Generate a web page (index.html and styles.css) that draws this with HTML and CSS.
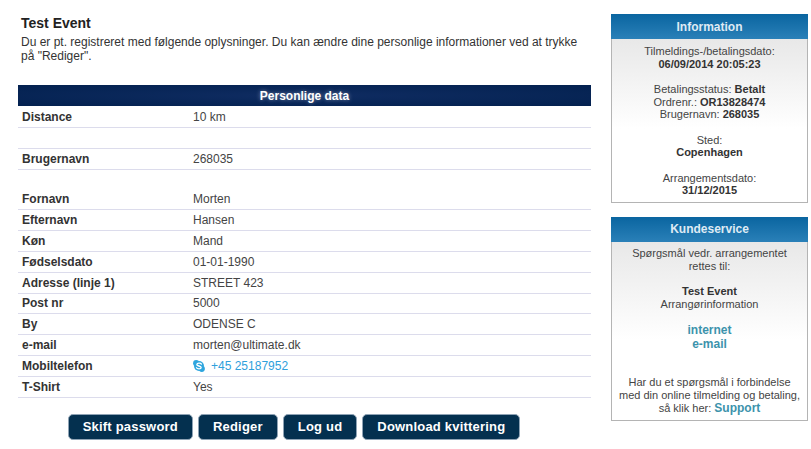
FILE: index.html
```html
<!DOCTYPE html>
<html lang="da">
<head>
<meta charset="utf-8">
<title>Test Event</title>
<link rel="stylesheet" href="styles.css">
</head>
<body>
<div class="page">
  <main class="main">
    <div class="intro">
      <h1 class="title">Test Event</h1>
      <p class="lead">Du er pt. registreret med følgende oplysninger. Du kan ændre dine personlige informationer ved at trykke på "Rediger".</p>
    </div>
    <h2 class="table-head">Personlige data</h2>
    <div class="row"><span class="label">Distance</span><span>10 km</span></div>
    <div class="row"></div>
    <div class="row"><span class="label">Brugernavn</span><span>268035</span></div>
    <div class="personal">
      <div class="row"><span class="label">Fornavn</span><span>Morten</span></div>
      <div class="row"><span class="label">Efternavn</span><span>Hansen</span></div>
      <div class="row"><span class="label">Køn</span><span>Mand</span></div>
      <div class="row"><span class="label">Fødselsdato</span><span>01-01-1990</span></div>
      <div class="row"><span class="label">Adresse (linje 1)</span><span>STREET 423</span></div>
      <div class="row"><span class="label">Post nr</span><span>5000</span></div>
      <div class="row"><span class="label">By</span><span>ODENSE C</span></div>
      <div class="row"><span class="label">e-mail</span><span>morten@ultimate.dk</span></div>
      <div class="row"><span class="label">Mobiltelefon</span><span class="phone"><svg class="skype" width="12" height="12" viewBox="0 0 12 12" aria-hidden="true"><circle cx="3.2" cy="3.2" r="3.1" fill="#2fa6de"/><circle cx="8.8" cy="8.8" r="3.1" fill="#2fa6de"/><circle cx="6" cy="6" r="5" fill="#2fa6de"/><path d="M8.4 4.1C7.8 2.9 4.1 2.7 3.8 4.5c-.3 1.9 4.6 1.1 4.4 3.1-.2 1.7-4 1.5-4.7.2" fill="none" stroke="#fff" stroke-width="1.3" stroke-linecap="round"/></svg>+45 25187952</span></div>
      <div class="row"><span class="label">T-Shirt</span><span>Yes</span></div>
    </div>
    <div class="actions">
      <button class="btn">Skift password</button>
      <button class="btn">Rediger</button>
      <button class="btn">Log ud</button>
      <button class="btn">Download kvittering</button>
    </div>
  </main>
  <aside class="side">
    <section class="box box-info">
      <h3 class="box-head">Information</h3>
      <div class="box-body">
        <p>Tilmeldings-/betalingsdato:<br><b>06/09/2014 20:05:23</b></p>
        <p>Betalingsstatus: <b>Betalt</b><br>Ordrenr.: <b>OR13828474</b><br>Brugernavn: <b>268035</b></p>
        <p>Sted:<br><b>Copenhagen</b></p>
        <p>Arrangementsdato:<br><b>31/12/2015</b></p>
      </div>
    </section>
    <section class="box box-service">
      <h3 class="box-head">Kundeservice</h3>
      <div class="box-body">
        <p>Spørgsmål vedr. arrangementet<br>rettes til:</p>
        <p><b>Test Event</b><br>Arrangørinformation</p>
        <p class="links"><a href="#">internet</a><br><a href="#">e-mail</a></p>
        <p class="support">Har du et spørgsmål i forbindelse<br>med din online tilmelding og betaling,<br>så klik her: <a href="#">Support</a></p>
      </div>
    </section>
  </aside>
</div>
</body>
</html>
```

FILE: styles.css
```css
* { box-sizing: border-box; }
html, body { margin: 0; padding: 0; }
body {
  background: #fff;
  color: #333;
  font: 12px/13px "Liberation Sans", Arial, sans-serif;
  overflow: hidden;
}
.page {
  display: flex;
  align-items: flex-start;
  gap: 20px;
  width: 811px;
  height: 449px;
  padding: 14px 4px 0 18px;
}
.main { width: 573px; flex: none; }
.intro { padding: 2px 3px 0; height: 71px; }
.title {
  margin: 0 0 5px;
  font-size: 14px;
  line-height: 14px;
  font-weight: bold;
  color: #222;
}
.lead { margin: 0; line-height: 14px; }
.table-head {
  margin: 0 0 1px;
  height: 21px;
  background: radial-gradient(ellipse at 50% 50%, #0f2c62 0%, #03214f 100%);
  color: #fff;
  font-size: 12px;
  line-height: 22px;
  font-weight: bold;
  text-align: center;
  text-shadow: 0 0 4px rgba(255,255,255,.45);
}
.row {
  display: grid;
  grid-template-columns: 171px 1fr;
  align-items: center;
  height: 21px;
  padding: 1px 4px 0;
  border-bottom: 1px solid #dcdcec;
  color: #444;
}
.personal { margin-top: 19.1px; }
.personal .row { height: 20.9px; }
.label { font-weight: bold; color: #333; }
.phone { display: flex; align-items: center; color: #2fa0dc; }
.skype { margin: -2px 6px 0 0; flex: none; }
.actions {
  display: flex;
  justify-content: center;
  gap: 5px;
  margin-top: 16px;
  padding-right: 21px;
}
.btn {
  height: 26px;
  padding: 0 14px 2px;
  border: 1px solid #8fa3b5;
  border-radius: 5px;
  background: #04304f;
  color: #fff;
  font: bold 13px "Liberation Sans", Arial, sans-serif;
  letter-spacing: .2px;
}
.side {
  display: flex;
  flex-direction: column;
  gap: 14px;
  width: 197px;
  flex: none;
}
.box { border: 1px solid #b4b4b4; }
.box-head {
  margin: -1px -1px 0;
  height: 25px;
  background: linear-gradient(#0a65a0, #2a80b8);
  color: #dfeaf4;
  font-size: 12px;
  line-height: 26px;
  font-weight: bold;
  text-align: center;
}
.box-body {
  background: linear-gradient(#e8e8e8, #fff 55%);
  padding: 6px 2px 0;
  text-align: center;
  color: #444;
  font-size: 11px;
  line-height: 12.67px;
}
.box-body p { margin: 0 0 12.67px; }
.box-body p:last-child { margin-bottom: 0; }
.box-body b { color: #333; }
.box-info .box-body { height: 163px; }
.box-service .box-head { line-height: 24px; }
.box-service .box-body { height: 178px; padding-top: 5px; }
.links { font-size: 12px; font-weight: bold; line-height: 14px; }
.links a, .support a { color: #3c93ac; text-decoration: none; font-weight: bold; }
.box-service .links { margin-bottom: 25px; }
.box-service .support { line-height: 13px; }
.support a { font-size: 12px; }
```
